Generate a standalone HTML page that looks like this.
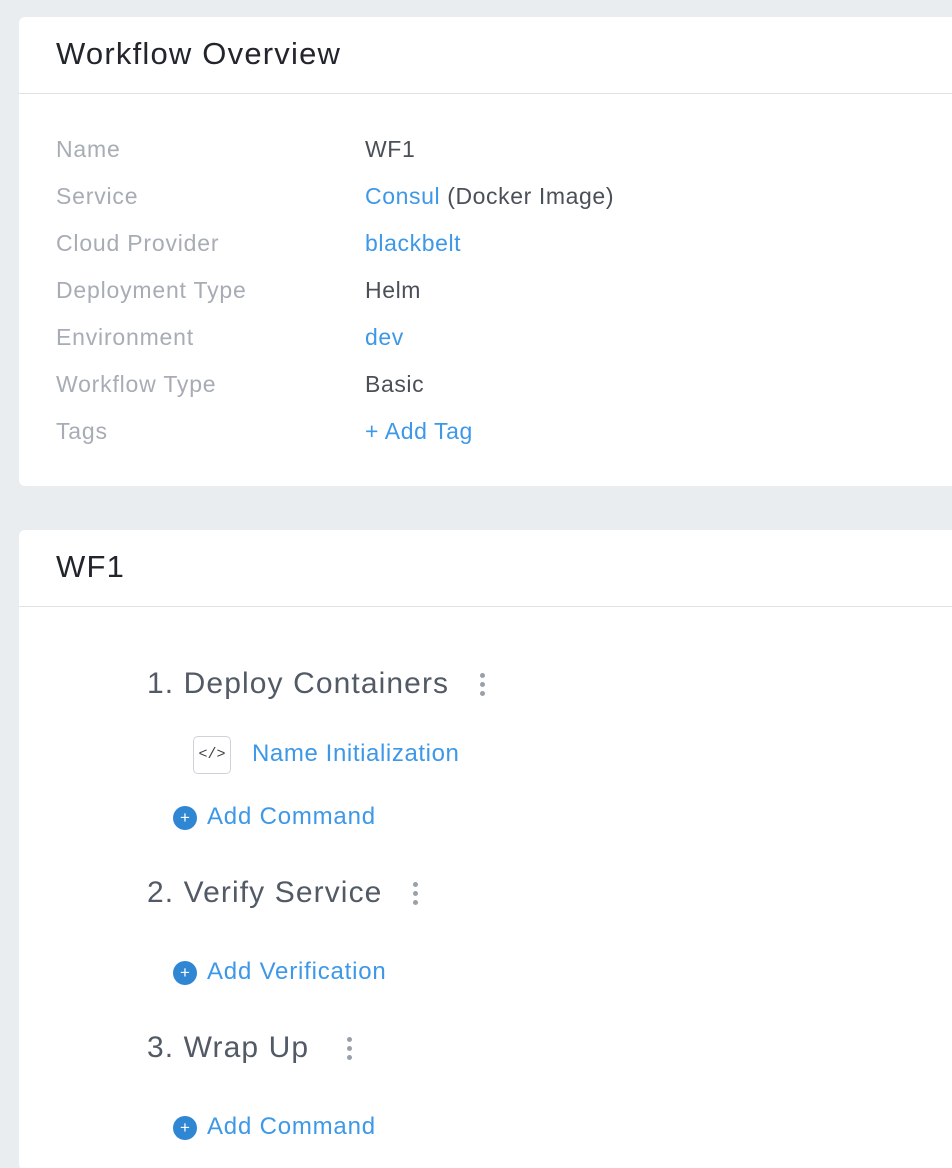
<!DOCTYPE html>
<html><head><style>
html,body{margin:0;height:1168px;overflow:hidden}
body{background:#eaedf0;font-family:"Liberation Sans",sans-serif;width:952px;position:relative}
.card{position:absolute;left:19px;right:-10px;background:#fff;border-radius:6px}
.hd{height:77px;border-bottom:1.5px solid #dfe1e6;font-size:31px;letter-spacing:1.2px;color:#22252b;padding-left:37px;line-height:74px;box-sizing:border-box}
.a{position:absolute;white-space:nowrap}
.lbl{left:37px;color:#a7acb5;font-size:23px;letter-spacing:0.8px}
.val{left:346px;color:#4a4f58;font-size:23px;letter-spacing:0.6px}
.blue{color:#3d98e8}
.step{font-size:30px;color:#525a66;letter-spacing:1.1px}
.keb{width:5px;height:5px;background:#9aa0aa;border-radius:50%;box-shadow:0 9px 0 #9aa0aa,0 18px 0 #9aa0aa}
.plus{width:24px;height:24px;border-radius:50%;background:#2f87d4;color:#fff;font-size:17px;line-height:23px;text-align:center}
.add{font-size:24px;color:#3d98e8;letter-spacing:0.8px}
</style></head><body>
<div class="card" style="top:17px;height:469px">
<div class="hd">Workflow Overview</div>
<div class="a lbl" style="top:119px">Name</div><div class="a val" style="top:119px">WF1</div>
<div class="a lbl" style="top:166px">Service</div><div class="a val" style="top:166px"><span class="blue">Consul</span> (Docker Image)</div>
<div class="a lbl" style="top:213px">Cloud Provider</div><div class="a val blue" style="top:213px">blackbelt</div>
<div class="a lbl" style="top:260px">Deployment Type</div><div class="a val" style="top:260px">Helm</div>
<div class="a lbl" style="top:307px">Environment</div><div class="a val blue" style="top:307px">dev</div>
<div class="a lbl" style="top:354px">Workflow Type</div><div class="a val" style="top:354px">Basic</div>
<div class="a lbl" style="top:401px">Tags</div><div class="a val blue" style="top:401px">+ Add Tag</div>
</div>
<div class="card" style="top:530px;height:640px">
<div class="hd">WF1</div>
</div>
<div class="a step" style="left:147px;top:667px">1. Deploy Containers</div>
<div class="a keb" style="left:480px;top:673px"></div>
<div class="a" style="left:193px;top:736px;width:36px;height:36px;border:1.5px solid #cfd3d9;border-radius:5px;font-size:15px;line-height:36px;text-align:center;color:#444;font-family:'Liberation Mono',monospace">&lt;/&gt;</div>
<div class="a blue" style="left:252px;top:740px;font-size:24px;letter-spacing:0.6px">Name Initialization</div>
<div class="a plus" style="left:173px;top:806px">+</div><div class="a add" style="left:207px;top:803px">Add Command</div>
<div class="a step" style="left:147px;top:876px">2. Verify Service</div>
<div class="a keb" style="left:413px;top:882px"></div>
<div class="a plus" style="left:173px;top:961px">+</div><div class="a add" style="left:207px;top:958px">Add Verification</div>
<div class="a step" style="left:147px;top:1031px">3. Wrap Up</div>
<div class="a keb" style="left:347px;top:1037px"></div>
<div class="a plus" style="left:173px;top:1116px">+</div><div class="a add" style="left:207px;top:1113px">Add Command</div>
</body></html>
